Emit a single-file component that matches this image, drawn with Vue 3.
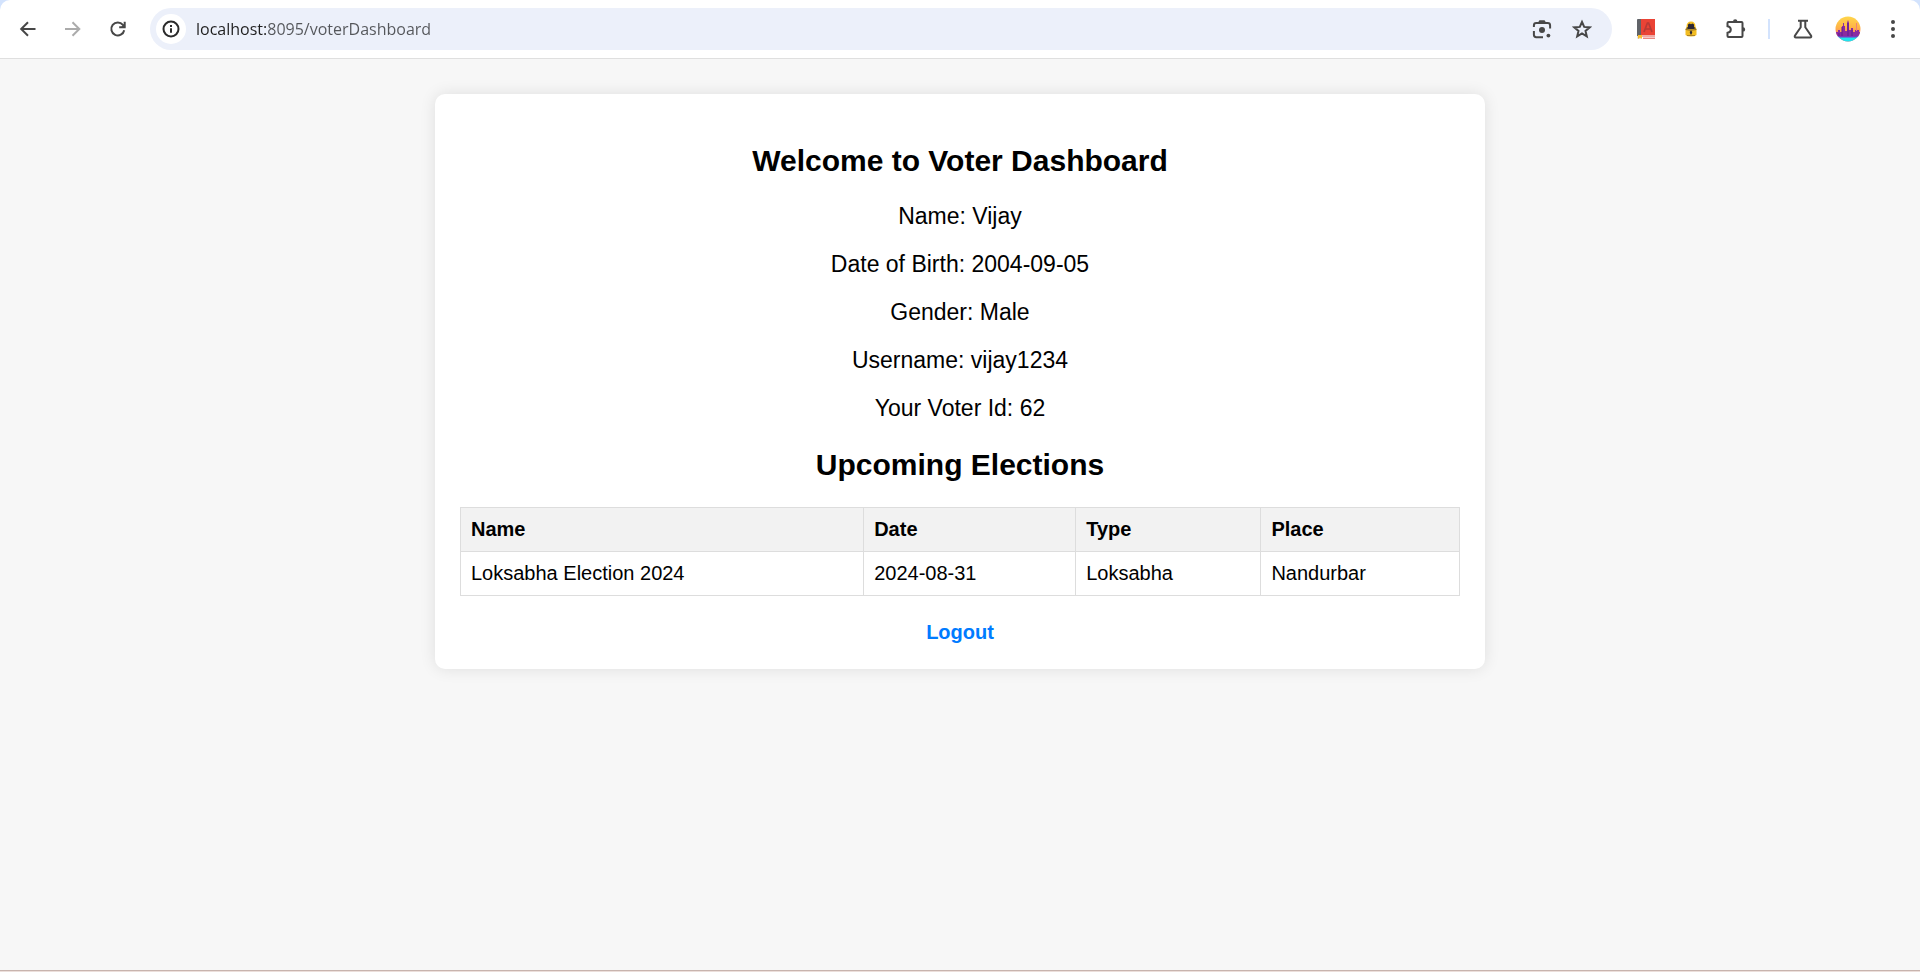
<script setup>
import { ref } from 'vue'

const address = ref('localhost:8095/voterDashboard')

const details = [
  { label: 'Name', value: 'Vijay' },
  { label: 'Date of Birth', value: '2004-09-05' },
  { label: 'Gender', value: 'Male' },
  { label: 'Username', value: 'vijay1234' },
  { label: 'Your Voter Id', value: '62' },
]

const elections = [
  { name: 'Loksabha Election 2024', date: '2024-08-31', type: 'Loksabha', place: 'Nandurbar' },
]
</script>

<template>
  <div class="window">
    <header class="frame">
      <div class="toolbar">
        <button class="tool" type="button" aria-label="Back">
          <svg width="20" height="20" viewBox="0 0 20 20" class="stroke">
            <path d="M17.500 10H4M10 3.200 3.200 10l6.800 6.800" />
          </svg>
        </button>
        <button class="tool faded" type="button" aria-label="Forward" disabled>
          <svg width="20" height="20" viewBox="0 0 20 20" class="stroke">
            <path d="M2 10H15.500M9.500 3.200 16.300 10 9.500 16.800" />
          </svg>
        </button>
        <button class="tool" type="button" aria-label="Reload">
          <svg width="20" height="20" viewBox="0 0 20 20" class="stroke">
            <path d="M16.200 11.200A6.500 6.500 0 1 1 14.900 5.900L16.600 8" />
            <path d="M16.700 2.700V8.200H11.200" />
            <path d="M16.700 4.500V8.200H13Z" fill="#474747" stroke="none" />
          </svg>
        </button>

        <div class="omnibox">
          <button class="site" type="button" aria-label="View site information">
            <svg width="20" height="20" viewBox="0 0 20 20" class="stroke">
              <circle cx="10" cy="10" r="7.500" />
              <path d="M10 9.200v4.600M10 6v2" />
            </svg>
          </button>
          <input v-model="address" class="address" type="text" aria-label="Address" spellcheck="false" />
          <button class="inner" type="button" aria-label="Search with Lens">
            <svg width="20" height="20" viewBox="0 0 20 20" class="stroke">
              <path d="M1.900 8V6.400Q1.900 4 4.300 4H15.700Q18.100 4 18.100 6.400V9.500M1.900 12V15.800Q1.900 18.200 4.300 18.200H11" />
              <path d="M7 3.800 8 2.300h4l1 1.500z" fill="#474747" />
              <circle cx="10" cy="11" r="3" fill="#474747" stroke="none" />
              <circle cx="16.400" cy="16.600" r="1.900" fill="#474747" stroke="none" />
            </svg>
          </button>
          <button class="inner" type="button" aria-label="Bookmark this tab">
            <svg width="20" height="20" viewBox="0 0 20 20" class="stroke">
              <path d="M10 3 12.200 7.900 17.600 8.400 13.500 11.900 14.800 17.300 10 14.400 5.200 17.300 6.500 11.900 2.400 8.400 7.800 7.900Z" />
            </svg>
          </button>
        </div>

        <button class="tool" type="button" aria-label="Dictionary">
          <svg width="20" height="20" viewBox="0 0 20 20">
            <path d="M2 0H19V16H5V20H2Q1 20 1 18V1Q1 0 2 0Z" fill="#e2e2e2" />
            <path d="M1 1Q1 0 2 0H5V17H1Z" fill="#606368" />
            <path d="M5 0H19V16H5Z" fill="#ea4335" />
            <path d="M4 17H19M7 19.200H19" stroke="#e0524a" stroke-width="1" />
            <path d="M8 13 11.400 4H12.600L16 13M9.500 10H14.500" fill="none" stroke="#b73a35" stroke-width="1.700" />
            <path d="M2 16H6V20L4 18.500 2 20Z" fill="#fbbc29" />
          </svg>
        </button>
        <button class="tool" type="button" aria-label="Privacy extension">
          <svg width="20" height="20" viewBox="0 0 20 20">
            <path d="M5.500 8Q5.500 2.500 10 2.500T14.500 8L15.500 10V16Q14 17.500 10 17.500T4.500 16V10Z" fill="#f3bd22" />
            <path d="M7 5.500 8.500 4.500 10 5.200 11.500 4.500 13 5.500V8L15 9.300Q10 11 5 9.300L7 8Z" fill="#2c2735" />
            <path d="M4.600 10.500Q10 12 15.400 10.500" stroke="#8b6a26" fill="none" />
            <path d="M10 11.500 11.300 13 10.500 15.500H9.500L8.700 13Z" fill="#2c2735" />
            <path d="M6 16.500H14" stroke="#af8322" />
          </svg>
        </button>
        <button class="tool" type="button" aria-label="Extensions">
          <svg width="22" height="22" viewBox="0 0 22 22" class="stroke">
            <path d="M3.500 4H16.500Q17.500 4 17.500 5V18Q17.500 19 16.500 19H3.500Q2.500 19 2.500 18V14.800Q5.800 14.300 5.800 11.500T2.500 8.200V5Q2.500 4 3.500 4Z" />
            <path d="M8 3.500a2.200 2.200 0 0 1 4.400 0zM18 9.200a2.200 2.200 0 0 1 0 4.400z" fill="#474747" stroke="none" />
          </svg>
        </button>
        <span class="divider"></span>
        <button class="tool" type="button" aria-label="Experiments">
          <svg width="20" height="20" viewBox="0 0 20 20" class="stroke">
            <path d="M5 1.800H15M7.700 2V8.300L1.900 16.600Q1.200 18.500 3 18.500H17Q18.800 18.500 18.100 16.600L12.300 8.300V2" />
          </svg>
        </button>
        <button class="tool" type="button" aria-label="Profile">
          <svg width="26" height="26" viewBox="0 0 26 26">
            <defs>
              <linearGradient id="sky" x1="0" y1="0" x2="0" y2="1">
                <stop offset="0" stop-color="#ffd84a" />
                <stop offset="0.450" stop-color="#ffb347" />
                <stop offset="0.800" stop-color="#fb6a6a" />
              </linearGradient>
              <clipPath id="disc"><circle cx="13" cy="13" r="12.500" /></clipPath>
            </defs>
            <g clip-path="url(#disc)">
              <path d="M0 0H26V26H0Z" fill="url(#sky)" />
              <path d="M0 16H3V14H5V16H7V10H8V7H9V10H10V15H12V7L13 4L14 7V14H16V12H18V16H20V14H21V7H22V14H24V16H26V21H0Z" fill="#8a2aa0" />
              <path d="M7 11V20M13 7V20M4 17V20M17 14V20" stroke="#5b1c94" stroke-width="1" />
              <path d="M21.500 7V15" stroke="#ef7f78" />
              <path d="M0 20H26V26H0Z" fill="#1fe3ee" />
              <path d="M2 20H24L21 21.500H5Z" fill="#7b35bd" />
            </g>
          </svg>
        </button>
        <button class="tool" type="button" aria-label="Menu">
          <svg width="20" height="20" viewBox="0 0 20 20" fill="#474747">
            <circle cx="10" cy="3" r="2" />
            <circle cx="10" cy="10" r="2" />
            <circle cx="10" cy="17" r="2" />
          </svg>
        </button>
      </div>
    </header>

    <main class="page">
      <section class="card">
        <h2>Welcome to Voter Dashboard</h2>
        <div class="details">
          <p v-for="item in details" :key="item.label">{{ item.label }}: {{ item.value }}</p>
        </div>
        <h2>Upcoming Elections</h2>
        <table>
          <thead>
            <tr>
              <th scope="col">Name</th>
              <th scope="col">Date</th>
              <th scope="col">Type</th>
              <th scope="col">Place</th>
            </tr>
          </thead>
          <tbody>
            <tr v-for="row in elections" :key="row.name">
              <td>{{ row.name }}</td>
              <td>{{ row.date }}</td>
              <td>{{ row.type }}</td>
              <td>{{ row.place }}</td>
            </tr>
          </tbody>
        </table>
        <a class="logout" href="#">Logout</a>
      </section>
    </main>
  </div>
</template>

<style>
body {
  margin: 0;
  background: #f7f7f7;
}
</style>

<style scoped>
.window {
  display: flex;
  flex-direction: column;
  min-height: 100vh;
  box-sizing: border-box;
  border-bottom: 1px solid #ecdfdb;
  background: #f7f7f7;
  font-family: "Liberation Sans", Arial, sans-serif;
  color: #000;
}

.frame {
  background: #d3e3fd;
}

.toolbar {
  display: flex;
  align-items: center;
  padding: 8px 5px;
  border-bottom: 1px solid #dfdfdf;
  border-radius: 10px 10px 0 0;
  background: #fff;
}

button {
  display: flex;
  align-items: center;
  justify-content: center;
  flex: none;
  padding: 0;
  border: 0;
  background: none;
}

.tool {
  width: 45px;
  height: 42px;
}

.faded {
  opacity: 0.45;
}

.stroke {
  fill: none;
  stroke: #474747;
  stroke-width: 2;
}

.omnibox {
  display: flex;
  align-items: center;
  flex: 1;
  height: 42px;
  margin: 0 11px 0 10px;
  padding: 0 10px 0 6px;
  box-sizing: border-box;
  border-radius: 21px;
  background: #ecf0fa;
}

.site {
  width: 30px;
  height: 30px;
  border-radius: 50%;
  background: #fff;
}

.site .stroke {
  stroke: #2b2b2b;
}

.address {
  flex: 1;
  min-width: 0;
  height: 30px;
  margin-left: 10px;
  padding: 0;
  border: 0;
  outline: 0;
  background: linear-gradient(90deg, #1f1f1f 70px, #54565a 70px);
  background-clip: text;
  -webkit-background-clip: text;
  color: transparent;
  caret-color: #1f1f1f;
  font: 16px "Open Sans", "Noto Sans", sans-serif;
}

.inner {
  width: 40px;
  height: 42px;
}

.divider {
  width: 2px;
  height: 20px;
  margin: 0 10px;
  background: #d3e3fd;
}

.page {
  flex: 1;
  padding: 35px 20px;
  border-bottom: 1px solid #c8b4ae;
}

.card {
  max-width: 1000px;
  margin: 0 auto;
  padding: 25px;
  border-radius: 10px;
  background: #fff;
  box-shadow: 0 0 16px rgba(0, 0, 0, 0.1);
  text-align: center;
}

h2 {
  margin: 25px 0;
  font-size: 30px;
  line-height: 34px;
}

.details {
  display: grid;
  gap: 22px;
  padding-bottom: 2px;
}

p {
  margin: 0;
  font-size: 23px;
  line-height: 26px;
}

table {
  width: 100%;
  border-collapse: collapse;
  font-size: 20px;
  line-height: 23px;
  text-align: left;
}

th,
td {
  padding: 10px;
  border: 1px solid #ddd;
}

th {
  background: #f2f2f2;
}

.logout {
  display: inline-block;
  margin-top: 25px;
  color: #007bff;
  font-size: 20px;
  font-weight: bold;
  line-height: 23px;
  text-decoration: none;
}
</style>
